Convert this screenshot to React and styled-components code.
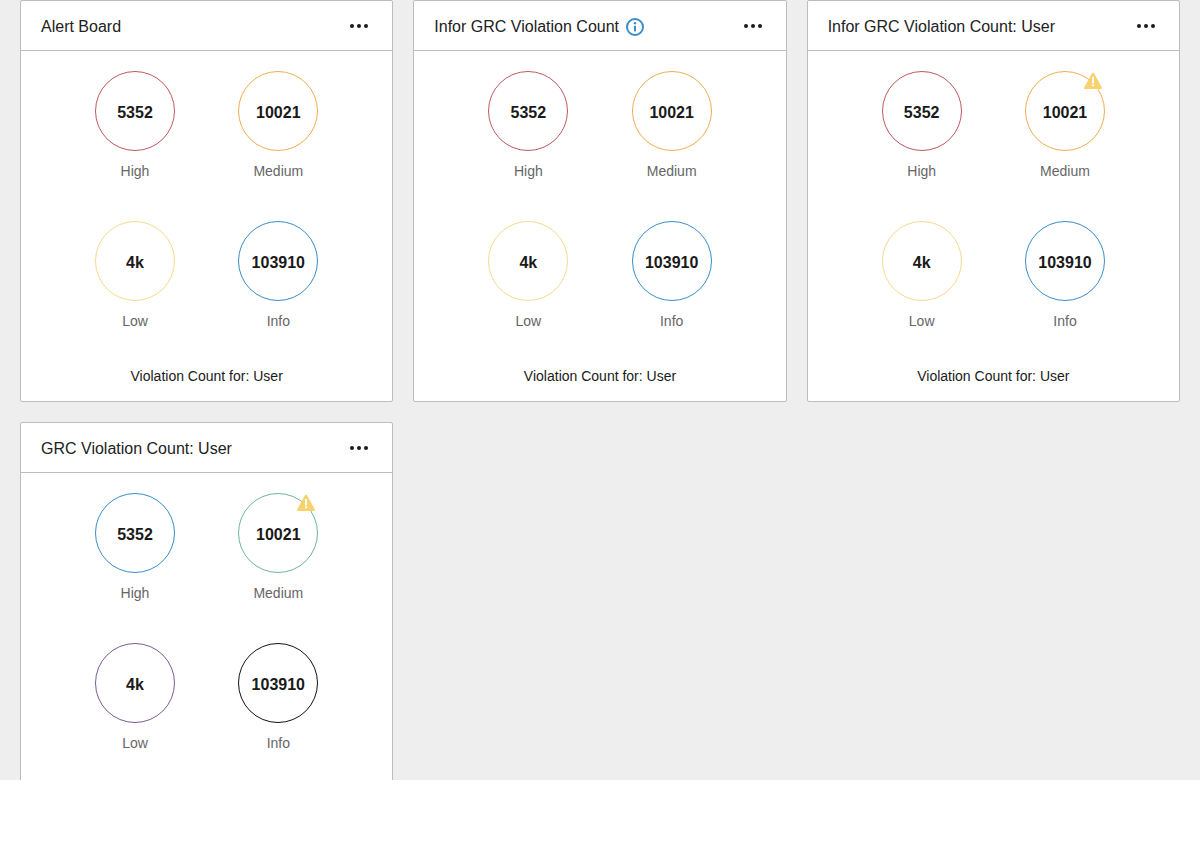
import React from "react";
import styled, { createGlobalStyle } from "styled-components";

const Global = createGlobalStyle`
  html, body { margin: 0; padding: 0; background: #fff; }
  body { font-family: "Liberation Sans", Arial, sans-serif; }
`;

const Stage = styled.div`
  height: 780px;
  overflow: hidden;
  background: #eeeeee;
  box-sizing: border-box;
  padding: 0 20px;
`;

const Board = styled.div`
  display: grid;
  grid-template-columns: repeat(3, 1fr);
  gap: 20px;
  align-items: start;
`;

const Card = styled.section`
  box-sizing: border-box;
  height: 402px;
  background: #fff;
  border: 1px solid #bdbdbd;
  border-radius: 2px;
  display: flex;
  flex-direction: column;
`;

const Header = styled.header`
  box-sizing: border-box;
  height: 50px;
  flex: none;
  padding: 0 24px 0 20px;
  border-bottom: 1px solid #bdbdbd;
  display: flex;
  align-items: center;
  justify-content: space-between;
`;

const TitleWrap = styled.div`
  display: flex;
  align-items: center;
  gap: 7px;
  padding-top: 2px;
`;

const Title = styled.h2`
  margin: 0;
  font-size: 16px;
  font-weight: 400;
  line-height: 20px;
  color: #222;
`;

const Dots = styled.div`
  display: flex;
  gap: 3px;
`;

const Dot = styled.span`
  width: 4px;
  height: 4px;
  border-radius: 50%;
  background: #1a1a1a;
`;

const Metrics = styled.div`
  display: grid;
  grid-template-columns: repeat(2, 143.33px);
  row-gap: 41px;
  justify-content: center;
  padding-top: 20px;
`;

const Metric = styled.div`
  display: flex;
  flex-direction: column;
  align-items: center;
`;

const Circle = styled.div`
  position: relative;
  box-sizing: border-box;
  width: 80px;
  height: 80px;
  padding-top: 4px;
  border-radius: 50%;
  border: 1px solid ${(p) => p.$color};
  display: flex;
  align-items: center;
  justify-content: center;
  font-size: 16px;
  font-weight: 700;
  color: #1a1a1a;
`;

const Badge = styled.svg`
  position: absolute;
  top: -1px;
  right: 1px;
  width: 20px;
  height: 20px;
`;

const Label = styled.div`
  margin-top: 11px;
  font-size: 14px;
  line-height: 18px;
  color: #666;
`;

const Footer = styled.div`
  margin-top: 37px;
  text-align: center;
  font-size: 14px;
  line-height: 18px;
  color: #1a1a1a;
`;

const InfoIcon = () => (
  <svg width="18" height="18" viewBox="0 0 18 18" aria-hidden="true">
    <circle cx="9" cy="9" r="8" fill="none" stroke="#3a8dc8" strokeWidth="2" />
    <circle cx="9" cy="5.3" r="1.2" fill="#3a8dc8" />
    <rect x="8" y="7.8" width="2" height="5.6" fill="#3a8dc8" />
  </svg>
);

const Warn = () => (
  <Badge viewBox="0 0 20 20" aria-hidden="true">
    <path d="M10 2.6 L18 17 L2 17 Z" fill="#f7d26e" stroke="#f7d26e" strokeWidth="2" strokeLinejoin="round" />
    <rect x="9" y="6" width="2" height="6.4" fill="#fff" />
    <rect x="9" y="13.4" width="2" height="1.8" fill="#fff" />
  </Badge>
);

const RED = "#c0575f";
const ORANGE = "#f0ad4e";
const YELLOW = "#f7d98c";
const BLUE = "#3a8dc8";
const TEAL = "#6fb3a0";
const PURPLE = "#7c5b94";
const BLACK = "#111111";

const standard = [RED, ORANGE, YELLOW, BLUE];

const cards = [
  { title: "Alert Board", colors: standard, footer: true },
  { title: "Infor GRC Violation Count", colors: standard, info: true, footer: true },
  { title: "Infor GRC Violation Count: User", colors: standard, warn: true, footer: true },
  { title: "GRC Violation Count: User", colors: [BLUE, TEAL, PURPLE, BLACK], warn: true },
];

const metrics = [
  { value: "5352", label: "High" },
  { value: "10021", label: "Medium" },
  { value: "4k", label: "Low" },
  { value: "103910", label: "Info" },
];

export default function App() {
  return (
    <>
      <Global />
      <Stage>
        <Board>
          {cards.map((card) => (
            <Card key={card.title}>
              <Header>
                <TitleWrap>
                  <Title>{card.title}</Title>
                  {card.info && <InfoIcon />}
                </TitleWrap>
                <Dots>
                  <Dot />
                  <Dot />
                  <Dot />
                </Dots>
              </Header>
              <Metrics>
                {metrics.map((m, i) => (
                  <Metric key={m.label}>
                    <Circle $color={card.colors[i]}>
                      {m.value}
                      {card.warn && i === 1 && <Warn />}
                    </Circle>
                    <Label>{m.label}</Label>
                  </Metric>
                ))}
              </Metrics>
              {card.footer && <Footer>Violation Count for: User</Footer>}
            </Card>
          ))}
        </Board>
      </Stage>
    </>
  );
}
